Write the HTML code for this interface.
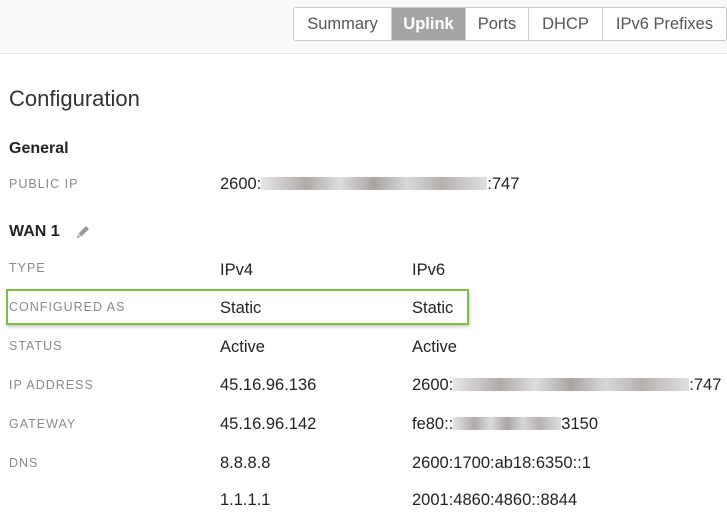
<!DOCTYPE html><html><head><style>
body{margin:0;width:727px;height:515px;background:#fff;font-family:"Liberation Sans",sans-serif;position:relative;overflow:hidden}
.top{position:absolute;left:0;top:0;width:727px;height:53px;background:#f9f9f9;border-bottom:1px solid #e4e4e4}
.tabs{position:absolute;left:293px;top:7px;height:32px;width:432px;border:1px solid #c8c8c8;border-radius:3px;display:flex;background:#fff;overflow:hidden}
.tabs div{font-size:16.5px;color:#555;line-height:32px;text-align:center;white-space:nowrap;border-left:1px solid #d0d0d0;box-sizing:border-box;flex:none}
.tabs div:first-child{border-left:none}
.tabs .on{background:#a3a4a6;color:#fff;font-weight:bold}
.a{position:absolute;white-space:nowrap}
h1{position:absolute;left:9px;top:86px;margin:0;font-size:22px;font-weight:normal;color:#333}
.h{font-size:16px;font-weight:bold;color:#222}
.l{font-size:12.5px;color:#8a8a8a;letter-spacing:1px}
.v{font-size:16.5px;color:#222}
.b{display:inline-block;height:13px;vertical-align:-1px;background:linear-gradient(90deg,#e6e6e6,#b0aaa8 20%,#ddd 35%,#a9a4a2 50%,#d8d8d8 65%,#b5b0ae 80%,#e0e0e0)}
.g{position:absolute;left:6px;top:289px;width:459px;height:32px;border:2px solid #7cbd45;box-shadow:1px 2px 3px rgba(0,0,0,.2)}
</style></head><body>
<div class="top"><div class="tabs"><div style="width:97px">Summary</div><div class="on" style="width:74px">Uplink</div><div style="width:63px">Ports</div><div style="width:74px">DHCP</div><div style="width:124px">IPv6 Prefixes</div></div></div>
<h1>Configuration</h1>
<div class="a h" style="left:9px;top:140px">General</div>
<div class="a l" style="left:9px;top:177px">PUBLIC IP</div>
<div class="a v" style="left:220px;top:175px">2600:<span class="b" style="width:226px"></span>:747</div>
<div class="a h" style="left:9px;top:223px">WAN 1</div>
<svg class="a" style="left:75px;top:224px" width="16" height="16" viewBox="0 0 16 16"><path d="M2 14l1-4 8-8 3 3-8 8z" fill="#999"/><path d="M3 10l3 3" stroke="#fff" stroke-width="1"/></svg>
<div class="g"></div>
<div class="a l" style="left:9px;top:261px">TYPE</div>
<div class="a v" style="left:220px;top:261px">IPv4</div><div class="a v" style="left:412px;top:261px">IPv6</div>
<div class="a l" style="left:9px;top:300px">CONFIGURED AS</div>
<div class="a v" style="left:220px;top:299px">Static</div><div class="a v" style="left:412px;top:299px">Static</div>
<div class="a l" style="left:9px;top:339px">STATUS</div>
<div class="a v" style="left:220px;top:338px">Active</div><div class="a v" style="left:412px;top:338px">Active</div>
<div class="a l" style="left:9px;top:378px">IP ADDRESS</div>
<div class="a v" style="left:220px;top:376px">45.16.96.136</div><div class="a v" style="left:412px;top:376px">2600:<span class="b" style="width:236px"></span>:747</div>
<div class="a l" style="left:9px;top:417px">GATEWAY</div>
<div class="a v" style="left:220px;top:415px">45.16.96.142</div><div class="a v" style="left:412px;top:415px">fe80::<span class="b" style="width:108px"></span>3150</div>
<div class="a l" style="left:9px;top:456px">DNS</div>
<div class="a v" style="left:220px;top:454px">8.8.8.8</div><div class="a v" style="left:412px;top:454px">2600:1700:ab18:6350::1</div>
<div class="a v" style="left:220px;top:491px">1.1.1.1</div><div class="a v" style="left:412px;top:491px">2001:4860:4860::8844</div>
</body></html>
